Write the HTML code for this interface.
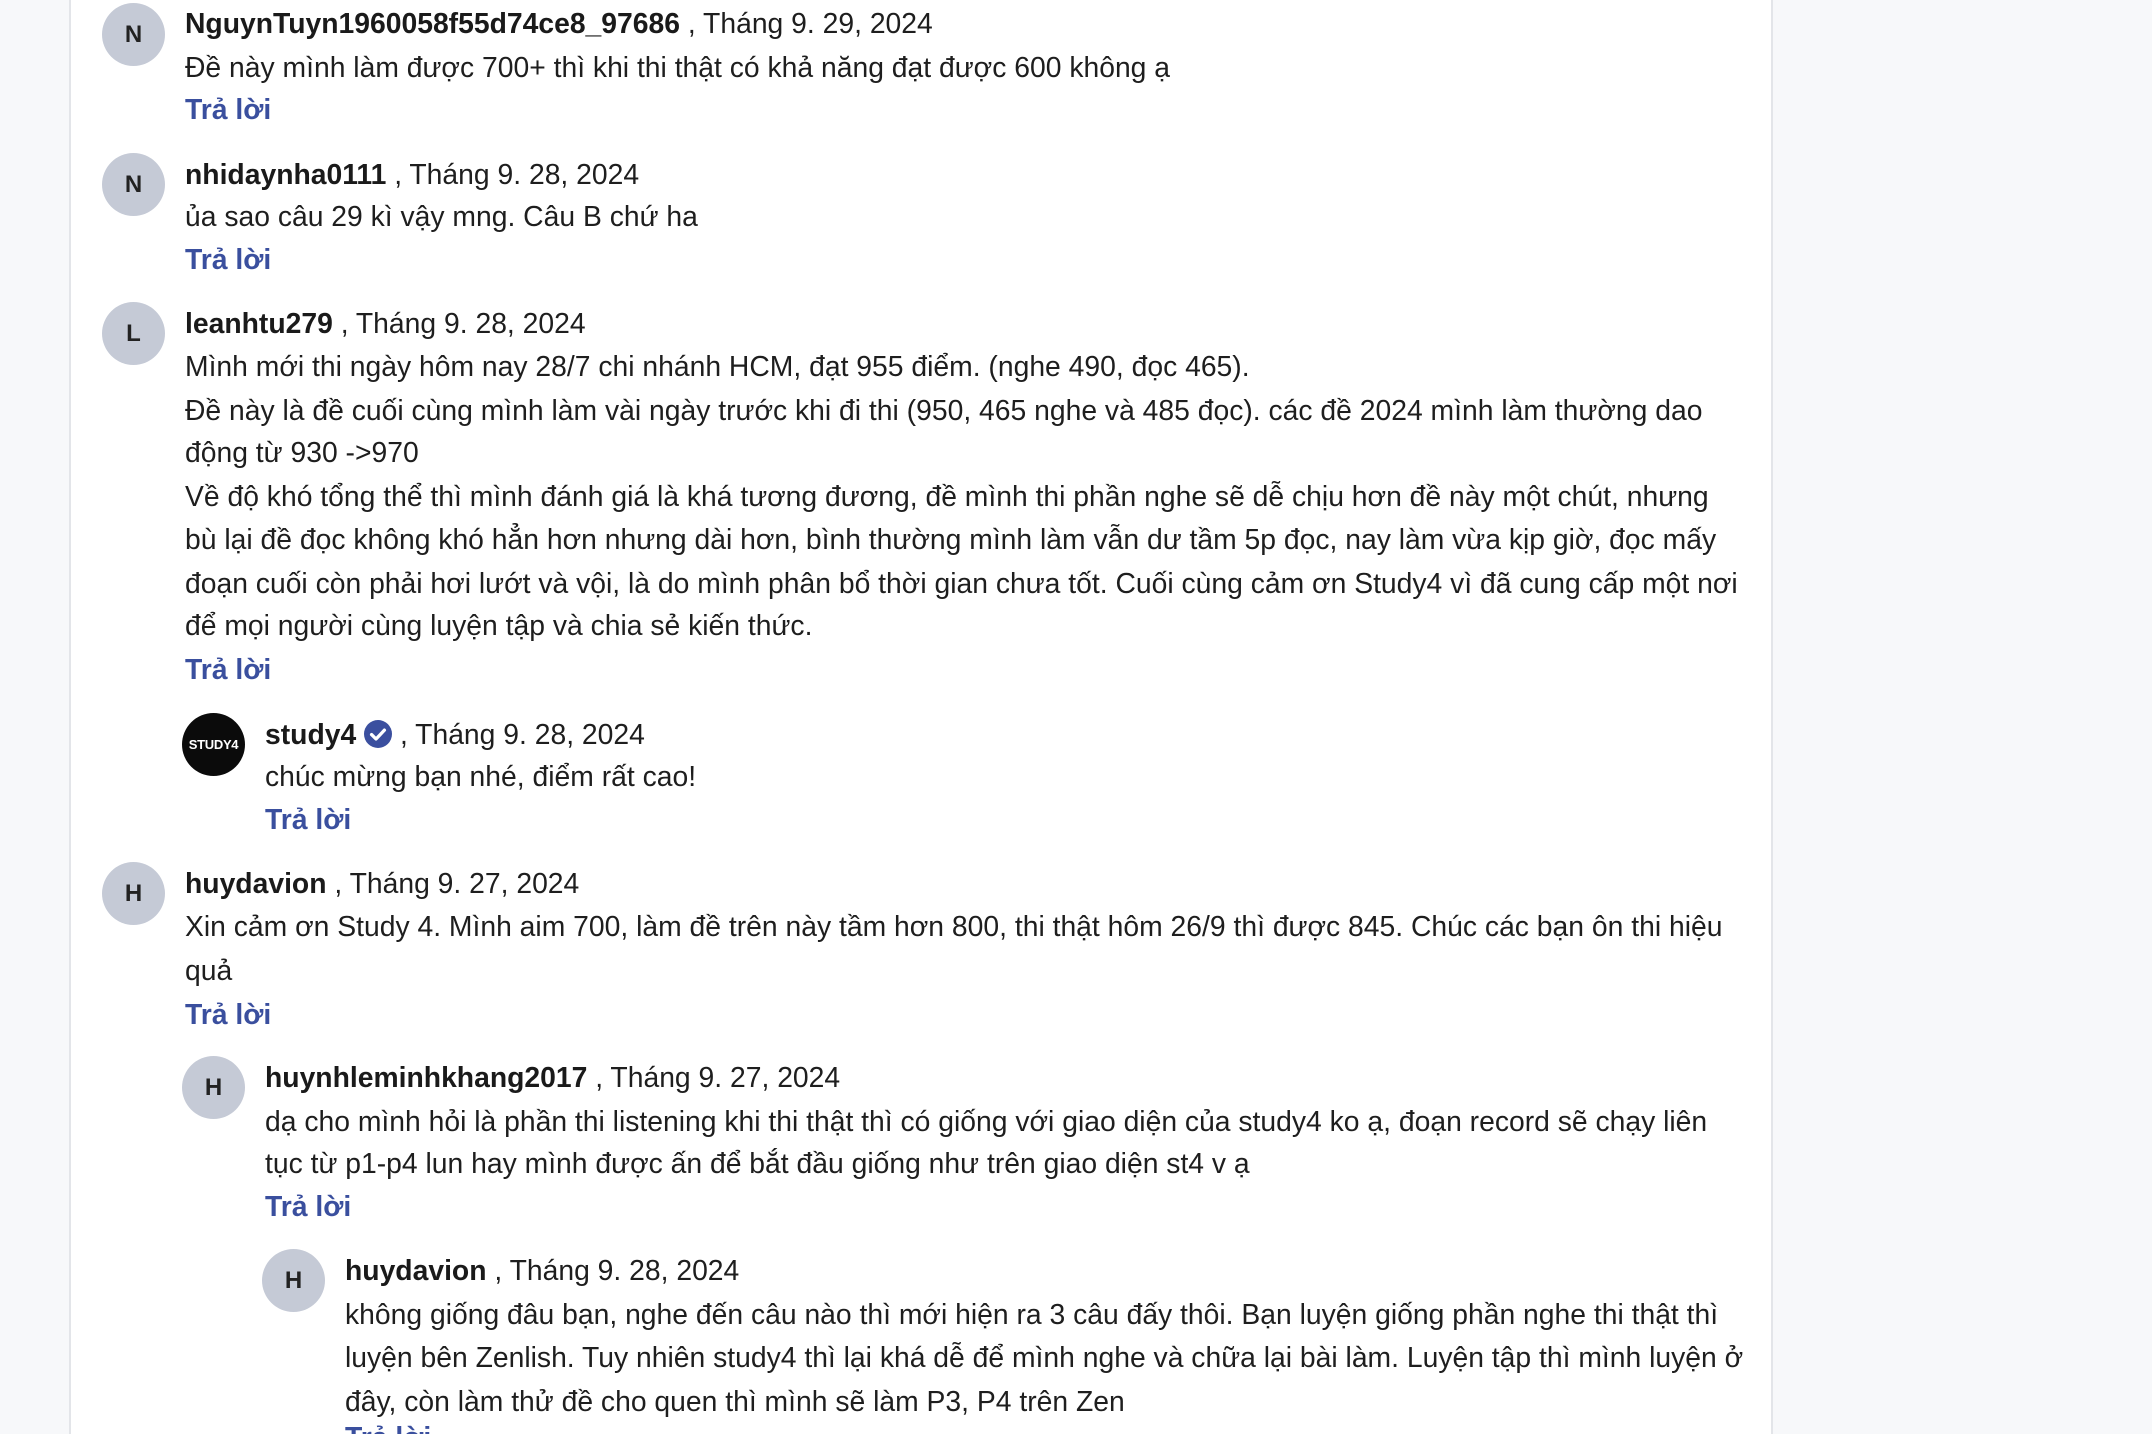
<!DOCTYPE html>
<html><head><meta charset="utf-8"><style>
html,body{margin:0;padding:0;width:2152px;height:1434px;overflow:hidden;}
body{background:#f7f8fa;position:relative;font-family:"Liberation Sans",Arial,sans-serif;}
.card{position:absolute;left:69px;top:0;width:1704px;height:1434px;background:#fff;border-left:2px solid #e3e5e9;border-right:2px solid #e3e5e9;box-sizing:border-box;}
.l{position:absolute;font-size:28.3px;line-height:43px;height:43px;color:#1e1e1e;white-space:nowrap;}
.n{font-weight:bold;color:#1a1a1a;}
.r{color:#3a4f9e;font-weight:bold;}
.av{position:absolute;width:63px;height:63px;border-radius:50%;background:#c5cad6;color:#222;font-weight:bold;font-size:24px;display:flex;align-items:center;justify-content:center;}
.s4{background:#0b0b0b;color:#fff;font-size:13px;letter-spacing:-0.3px;}
.chk{display:inline-block;vertical-align:-4px;width:28px;height:28px;}
</style></head><body>
<div class="card"></div>

<div class="av" style="left:102px;top:3px">N</div>
<div class="l" style="left:185px;top:2px"><span class="n">NguynTuyn1960058f55d74ce8_97686</span> , Tháng 9. 29, 2024</div>
<div class="l" style="left:185px;top:46px">Đề này mình làm được 700+ thì khi thi thật có khả năng đạt được 600 không ạ</div>
<div class="l r" style="left:185px;top:88px">Trả lời</div>

<div class="av" style="left:102px;top:153px">N</div>
<div class="l" style="left:185px;top:153px"><span class="n">nhidaynha0111</span> , Tháng 9. 28, 2024</div>
<div class="l" style="left:185px;top:195px">ủa sao câu 29 kì vậy mng. Câu B chứ ha</div>
<div class="l r" style="left:185px;top:238px">Trả lời</div>

<div class="av" style="left:102px;top:302px">L</div>
<div class="l" style="left:185px;top:302px"><span class="n">leanhtu279</span> , Tháng 9. 28, 2024</div>
<div class="l" style="left:185px;top:345px">Mình mới thi ngày hôm nay 28/7 chi nhánh HCM, đạt 955 điểm. (nghe 490, đọc 465).</div>
<div class="l" style="left:185px;top:389px">Đề này là đề cuối cùng mình làm vài ngày trước khi đi thi (950, 465 nghe và 485 đọc). các đề 2024 mình làm thường dao</div>
<div class="l" style="left:185px;top:431px">động từ 930 -&gt;970</div>
<div class="l" style="left:185px;top:475px">Về độ khó tổng thể thì mình đánh giá là khá tương đương, đề mình thi phần nghe sẽ dễ chịu hơn đề này một chút, nhưng</div>
<div class="l" style="left:185px;top:518px">bù lại đề đọc không khó hẳn hơn nhưng dài hơn, bình thường mình làm vẫn dư tầm 5p đọc, nay làm vừa kịp giờ, đọc mấy</div>
<div class="l" style="left:185px;top:562px">đoạn cuối còn phải hơi lướt và vội, là do mình phân bổ thời gian chưa tốt. Cuối cùng cảm ơn Study4 vì đã cung cấp một nơi</div>
<div class="l" style="left:185px;top:604px">để mọi người cùng luyện tập và chia sẻ kiến thức.</div>
<div class="l r" style="left:185px;top:648px">Trả lời</div>

<div class="av s4" style="left:182px;top:713px">STUDY4</div>
<div class="l" style="left:265px;top:713px"><span class="n">study4</span> <svg class="chk" viewBox="0 0 24 24"><circle cx="12" cy="12" r="12" fill="#3b4f9f"/><path d="M6.5 12.5l3.8 3.8 7.2-7.6" stroke="#fff" stroke-width="2.8" fill="none" stroke-linecap="round" stroke-linejoin="round"/></svg> , Tháng 9. 28, 2024</div>
<div class="l" style="left:265px;top:755px">chúc mừng bạn nhé, điểm rất cao!</div>
<div class="l r" style="left:265px;top:798px">Trả lời</div>

<div class="av" style="left:102px;top:862px">H</div>
<div class="l" style="left:185px;top:862px"><span class="n">huydavion</span> , Tháng 9. 27, 2024</div>
<div class="l" style="left:185px;top:905px">Xin cảm ơn Study 4. Mình aim 700, làm đề trên này tầm hơn 800, thi thật hôm 26/9 thì được 845. Chúc các bạn ôn thi hiệu</div>
<div class="l" style="left:185px;top:949px">quả</div>
<div class="l r" style="left:185px;top:993px">Trả lời</div>

<div class="av" style="left:182px;top:1056px">H</div>
<div class="l" style="left:265px;top:1056px"><span class="n">huynhleminhkhang2017</span> , Tháng 9. 27, 2024</div>
<div class="l" style="left:265px;top:1100px">dạ cho mình hỏi là phần thi listening khi thi thật thì có giống với giao diện của study4 ko ạ, đoạn record sẽ chạy liên</div>
<div class="l" style="left:265px;top:1142px">tục từ p1-p4 lun hay mình được ấn để bắt đầu giống như trên giao diện st4 v ạ</div>
<div class="l r" style="left:265px;top:1185px">Trả lời</div>

<div class="av" style="left:262px;top:1249px">H</div>
<div class="l" style="left:345px;top:1249px"><span class="n">huydavion</span> , Tháng 9. 28, 2024</div>
<div class="l" style="left:345px;top:1293px">không giống đâu bạn, nghe đến câu nào thì mới hiện ra 3 câu đấy thôi. Bạn luyện giống phần nghe thi thật thì</div>
<div class="l" style="left:345px;top:1336px">luyện bên Zenlish. Tuy nhiên study4 thì lại khá dễ để mình nghe và chữa lại bài làm. Luyện tập thì mình luyện ở</div>
<div class="l" style="left:345px;top:1380px">đây, còn làm thử đề cho quen thì mình sẽ làm P3, P4 trên Zen</div>
<div class="l r" style="left:345px;top:1416px">Trả lời</div>
</body></html>
